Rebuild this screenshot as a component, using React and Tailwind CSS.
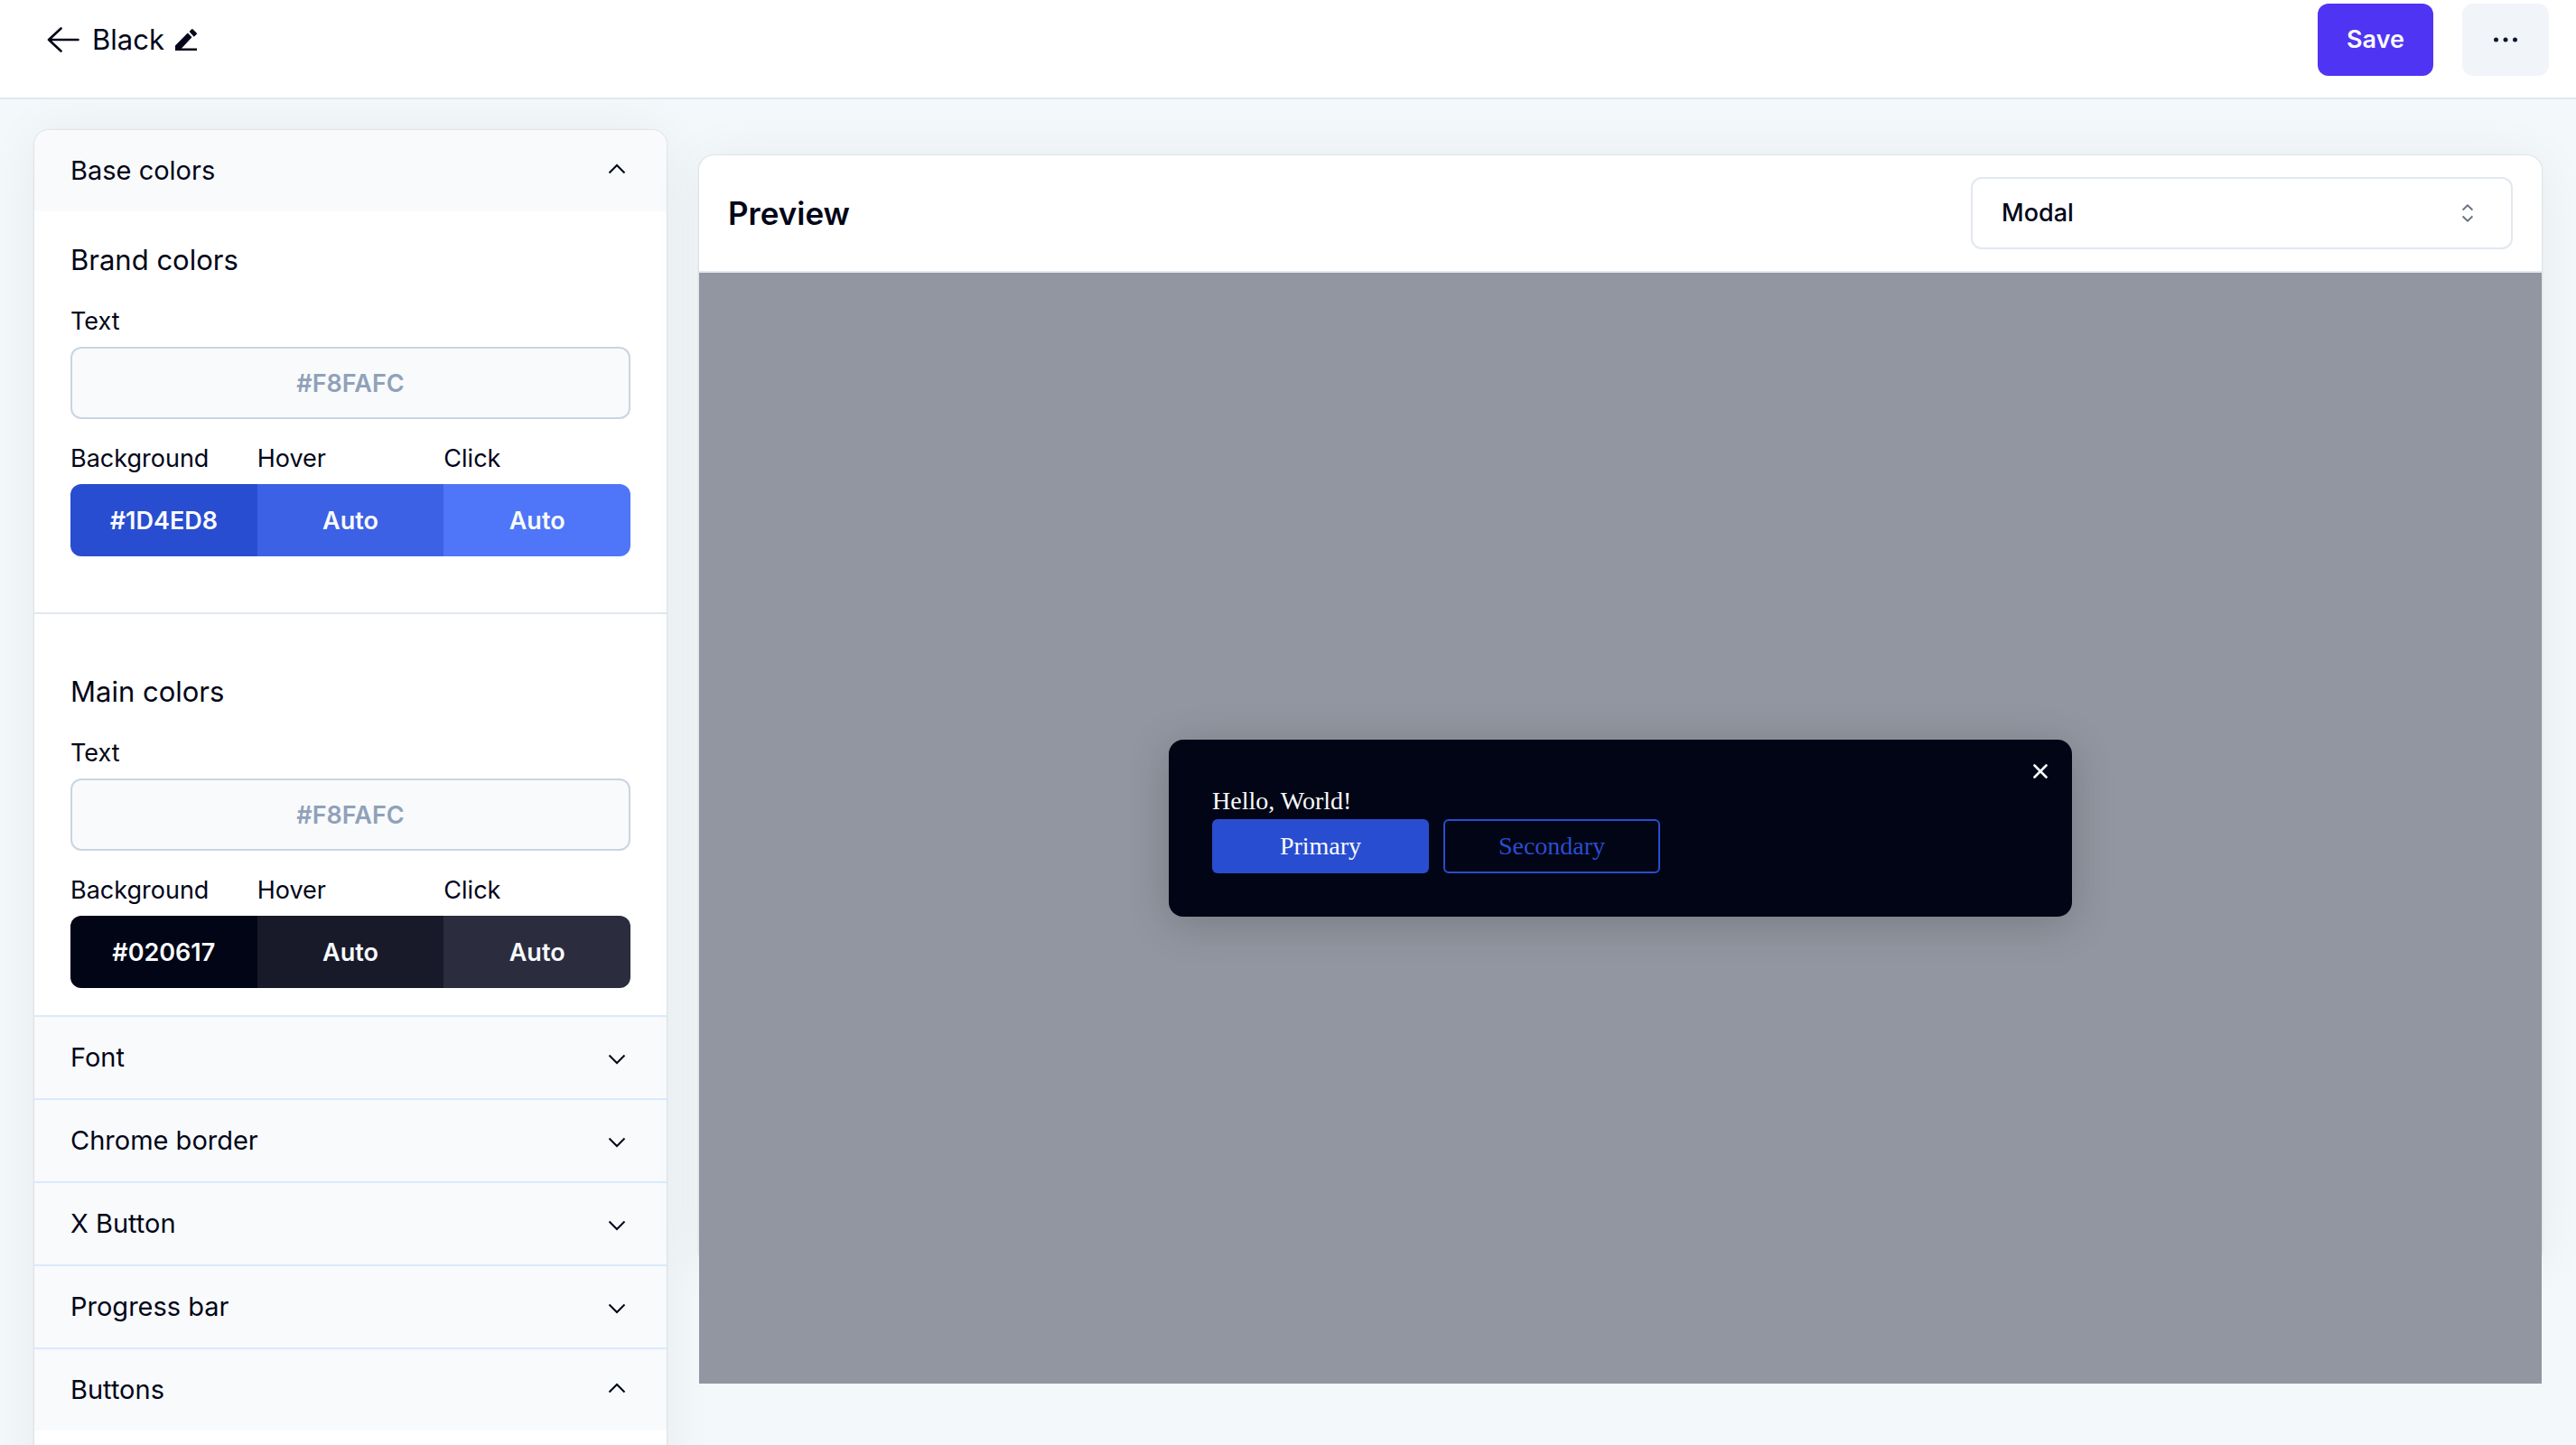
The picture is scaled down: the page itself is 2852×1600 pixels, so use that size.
import React, { useState } from 'react';

const ArrowLeftIcon = () => (
  <svg className="w-9 h-7" viewBox="0 0 36 28" fill="none" stroke="currentColor" strokeWidth="2.6" strokeLinecap="round" strokeLinejoin="round">
    <path d="M15.500 1.500 2 14l13.500 12.500M2 14h32.500" />
  </svg>
);

const PencilIcon = () => (
  <svg className="w-6 h-6" viewBox="0 0 24 24" fill="currentColor">
    <path d="M0 24v-5.500L13.800 4.400l4.700 4.800L7 21.600h17V24z" />
    <path d="M15.600 2.900 18 .5a1.200 1.200 0 0 1 1.700 0L23.600 4.400a1.200 1.200 0 0 1 0 1.700l-2.900 2.600z" />
  </svg>
);

const ChevronIcon = ({ open }) => (
  <svg className="w-5 h-4" viewBox="0 0 20 16" fill="none" stroke="currentColor" strokeWidth="2">
    <path d={open ? 'M1.500 10.500 10 2l8.500 8.500' : 'M1.500 5.500 10 14l8.500-8.500'} />
  </svg>
);

const SelectorIcon = () => (
  <svg className="w-3 h-5 text-gray-500" viewBox="0 0 12 20" fill="none" stroke="currentColor" strokeWidth="2">
    <path d="M.6 6.600 6 1.400l5.400 5.200M.6 13.400 6 18.600l5.400-5.200" />
  </svg>
);

const CloseIcon = () => (
  <svg className="w-4 h-4" viewBox="0 0 16 16" fill="none" stroke="currentColor" strokeWidth="2.600" strokeLinecap="round">
    <path d="m1.500 1.500 13 13M14.500 1.500l-13 13" />
  </svg>
);

const AccordionItem = ({ title, defaultOpen = false, first = false, children }) => {
  const [open, setOpen] = useState(defaultOpen);

  return (
    <div className={first ? '' : 'border-t-2 border-blue-100'}>
      <button
        type="button"
        aria-expanded={open}
        onClick={() => setOpen(!open)}
        className={`flex w-full items-center justify-between bg-slate-50 pl-10 pr-[45px] h-[90px] text-[29px] leading-[40px] ${first ? 'rounded-t-2xl' : ''}`}
      >
        {title}
        <ChevronIcon open={open} />
      </button>
      {open && children}
    </div>
  );
};

const brandSwatches = [
  { label: 'Background', value: '#1D4ED8', color: 'bg-[#294dd0]' },
  { label: 'Hover', value: 'Auto', color: 'bg-[#3c61e5]' },
  { label: 'Click', value: 'Auto', color: 'bg-[#4f75f8]' },
];

const mainSwatches = [
  { label: 'Background', value: '#020617', color: 'bg-[#020515]' },
  { label: 'Hover', value: 'Auto', color: 'bg-[#181a2a]' },
  { label: 'Click', value: 'Auto', color: 'bg-[#2b2d3f]' },
];

const ColorGroup = ({ id, title, text, swatches }) => (
  <>
    <h3 className="text-[31px] leading-[48px]">{title}</h3>
    <div className="mt-6 flex flex-col gap-2">
      <label htmlFor={`${id}-text`} className="text-[27px] leading-[40px]">Text</label>
      <input
        id={`${id}-text`}
        defaultValue={text}
        className="h-20 w-full rounded-xl border-2 border-slate-300 bg-slate-50 text-center text-[27px] font-semibold text-slate-400"
      />
    </div>
    <div className="mt-6 grid grid-cols-3">
      {swatches.map(({ label, value, color }, index) => (
        <div key={label} className="flex flex-col gap-2">
          <label htmlFor={`${id}-${label}`} className="text-[27px] leading-[40px]">{label}</label>
          <input
            id={`${id}-${label}`}
            defaultValue={value}
            className={`h-20 w-full text-center text-[27px] font-semibold text-slate-50 ${color} ${index === 0 ? 'rounded-l-xl' : ''} ${index === 2 ? 'rounded-r-xl' : ''}`}
          />
        </div>
      ))}
    </div>
  </>
);

const Header = () => (
  <header className="flex items-start justify-between border-b-2 border-slate-200 bg-white pt-1 pb-6 pl-[52px] pr-[30px]">
    <div className="flex h-20 items-center">
      <a href="#" aria-label="Back"><ArrowLeftIcon /></a>
      <h1 className="ml-3.5 text-[31px] leading-[40px]">Black</h1>
      <button type="button" aria-label="Rename" className="ml-3"><PencilIcon /></button>
    </div>
    <div className="flex gap-8">
      <button type="button" className="h-20 rounded-xl bg-[#5034f4] px-8 text-[27px] font-semibold text-slate-50">Save</button>
      <button type="button" aria-label="More" className="flex h-20 w-24 items-center justify-center rounded-xl bg-slate-100 text-slate-900">
        <svg className="w-7 h-2" viewBox="0 0 28 8" fill="currentColor">
          <circle cx="3.500" cy="4" r="2.500" />
          <circle cx="14" cy="4" r="2.500" />
          <circle cx="24.500" cy="4" r="2.500" />
        </svg>
      </button>
    </div>
  </header>
);

const Sidebar = () => (
  <aside className="mt-[34px] w-[700px] shrink-0 rounded-2xl bg-white shadow-[0_0_2px_rgba(0,0,0,0.22),0_4px_60px_rgba(0,0,0,0.06)]">
    <AccordionItem title="Base colors" defaultOpen first>
      <div className="border-b-2 border-slate-200 px-10 pt-[30px] pb-[62px]">
        <ColorGroup id="brand" title="Brand colors" text="#F8FAFC" swatches={brandSwatches} />
      </div>
      <div className="px-10 pt-[62px] pb-[30px]">
        <ColorGroup id="main" title="Main colors" text="#F8FAFC" swatches={mainSwatches} />
      </div>
    </AccordionItem>
    <AccordionItem title="Font" />
    <AccordionItem title="Chrome border" />
    <AccordionItem title="X Button" />
    <AccordionItem title="Progress bar" />
    <AccordionItem title="Buttons" defaultOpen>
      <div className="h-40" />
    </AccordionItem>
  </aside>
);

const PreviewModal = () => (
  <div
    role="dialog"
    aria-label="Hello, World!"
    className="relative w-[1000px] rounded-2xl bg-[#020515] p-12 font-['Liberation_Serif',serif] text-[28px] leading-[40px] text-slate-50 shadow-[0_8px_48px_rgba(0,0,0,0.18)]"
  >
    <button type="button" aria-label="Close" className="absolute top-[27px] right-[27px]"><CloseIcon /></button>
    <p>Hello, World!</p>
    <div className="flex gap-4">
      <button type="button" className="h-[60px] w-60 rounded-md bg-[#294dd0]">Primary</button>
      <button type="button" className="h-[60px] w-60 rounded-md border-2 border-[#294dd0] text-[#294dd0]">Secondary</button>
    </div>
  </div>
);

const Preview = () => (
  <section className="mt-[62px] h-[calc(100vh-370px)] flex-1 rounded-2xl bg-white shadow-[0_0_2px_rgba(0,0,0,0.22),0_4px_60px_rgba(0,0,0,0.06)]">
    <div className="flex items-center justify-between border-b-2 border-slate-200 px-8 py-6">
      <h2 className="text-[35px] leading-[48px] font-semibold">Preview</h2>
      <div className="relative">
        <select
          aria-label="Preview type"
          className="h-20 w-[600px] appearance-none rounded-xl border-2 border-slate-200 bg-white px-8 text-[27px] font-medium"
        >
          <option>Modal</option>
        </select>
        <span className="pointer-events-none absolute inset-y-0 right-11 flex items-center"><SelectorIcon /></span>
      </div>
    </div>
    {/* Backdrop is as tall as the card itself, so it runs past its bottom edge */}
    <div className="flex h-full items-center justify-center bg-[#9296a0]">
      <PreviewModal />
    </div>
  </section>
);

const App = () => (
  <div className="flex h-screen flex-col overflow-hidden bg-[#f3f8fb] font-['Inter',sans-serif] text-slate-950">
    <Header />
    <main className="flex min-h-0 flex-1 items-start gap-9 overflow-hidden px-[38px]">
      <Sidebar />
      <Preview />
    </main>
  </div>
);

export default App;
